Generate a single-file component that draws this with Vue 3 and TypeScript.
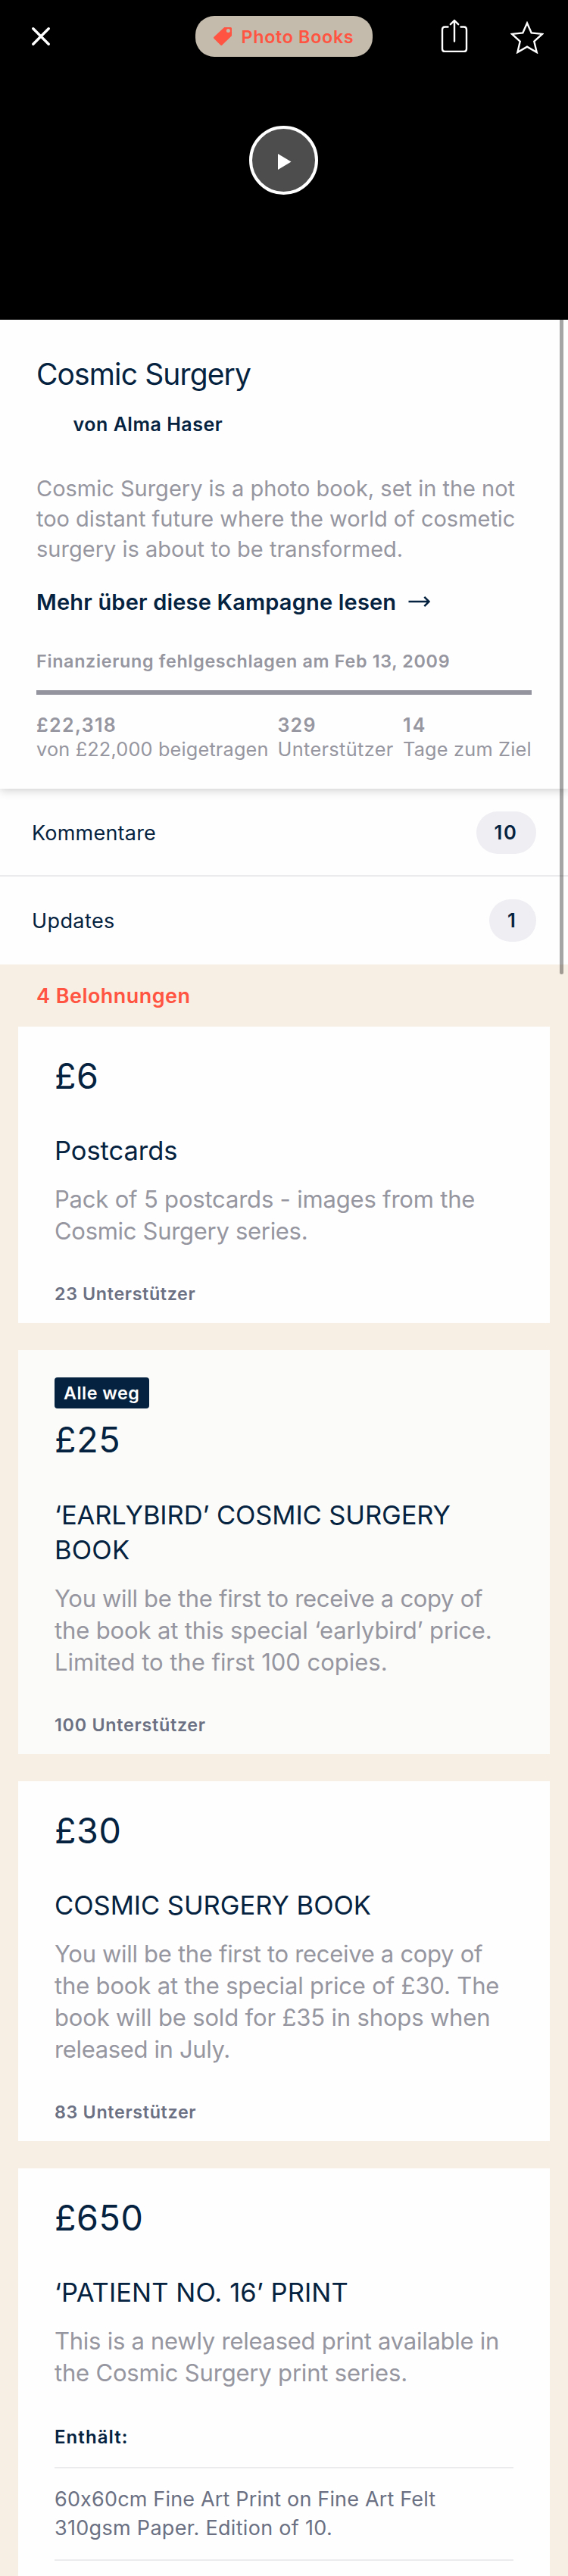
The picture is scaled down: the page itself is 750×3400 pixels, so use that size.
<script setup lang="ts">
interface Line {
  text: string
  spacing: number
}
interface Reward {
  badge?: string
  price: Line
  title: Line[]
  description: Line[]
  backers?: Line
  items?: Line[]
}

const blurb: Line[] = [
  { text: 'Cosmic Surgery is a photo book, set in the not', spacing: -0.01 },
  { text: 'too distant future where the world of cosmetic', spacing: -0.03 },
  { text: 'surgery is about to be transformed.', spacing: 0.01 },
]

const stats = [
  { value: { text: '£22,318', spacing: 1.35 }, label: { text: 'von £22,000 beigetragen', spacing: 0.17 } },
  { value: { text: '329', spacing: 1.2 }, label: { text: 'Unterstützer', spacing: 0.36 } },
  { value: { text: '14', spacing: 2.2 }, label: { text: 'Tage zum Ziel', spacing: 0.2 } },
]

const links = [
  { label: { text: 'Kommentare', spacing: 0.22 }, count: '10', wide: true },
  { label: { text: 'Updates', spacing: 0.4 }, count: '1', wide: false },
]

const rewards: Reward[] = [
  {
    price: { text: '£6', spacing: 0.6 },
    title: [{ text: 'Postcards', spacing: -0.05 }],
    description: [
      { text: 'Pack of 5 postcards - images from the', spacing: -0.19 },
      { text: 'Cosmic Surgery series.', spacing: -0.3 },
    ],
    backers: { text: '23 Unterstützer', spacing: 0.63 },
  },
  {
    badge: 'Alle weg',
    price: { text: '£25', spacing: 0.7 },
    title: [
      { text: '‘EARLYBIRD’ COSMIC SURGERY', spacing: -0.1 },
      { text: 'BOOK', spacing: 0.2 },
    ],
    description: [
      { text: 'You will be the first to receive a copy of', spacing: -0.31 },
      { text: 'the book at this special ‘earlybird’ price.', spacing: -0.14 },
      { text: 'Limited to the first 100 copies.', spacing: -0.02 },
    ],
    backers: { text: '100 Unterstützer', spacing: 0.73 },
  },
  {
    price: { text: '£30', spacing: 0.6 },
    title: [{ text: 'COSMIC SURGERY BOOK', spacing: -0.03 }],
    description: [
      { text: 'You will be the first to receive a copy of', spacing: -0.31 },
      { text: 'the book at the special price of £30. The', spacing: -0.16 },
      { text: 'book will be sold for £35 in shops when', spacing: -0.16 },
      { text: 'released in July.', spacing: -0.36 },
    ],
    backers: { text: '83 Unterstützer', spacing: 0.66 },
  },
  {
    price: { text: '£650', spacing: 0.6 },
    title: [{ text: '‘PATIENT NO. 16’ PRINT', spacing: 0.08 }],
    description: [
      { text: 'This is a newly released print available in', spacing: -0.26 },
      { text: 'the Cosmic Surgery print series.', spacing: -0.19 },
    ],
    items: [
      { text: '60x60cm Fine Art Print on Fine Art Felt', spacing: 0.17 },
      { text: '310gsm Paper. Edition of 10.', spacing: 0.3 },
    ],
  },
]

const tracking = (line: Line) => ({ letterSpacing: `${line.spacing}px` })
</script>

<template>
  <div class="page">
    <header class="hero">
      <nav class="toolbar">
        <svg class="close" width="24" height="24" viewBox="0 0 24 24" aria-label="Schließen">
          <path d="M1.8 1.8 22.2 22.2M22.2 1.8 1.8 22.2" />
        </svg>
        <span class="category">
          <svg class="tag" width="24" height="24" viewBox="0 0 24 24">
            <path
              fill-rule="evenodd"
              d="M14.2 0H22.5Q24 0 24 1.5V11.2L11.3 23.6Q10.2 24.5 9.2 23.5L.4 14.8Q-.4 13.8.5 12.8ZM19.4 1.9A2.5 2.5 0 1 0 19.4 6.9A2.5 2.5 0 1 0 19.4 1.9Z"
            />
          </svg>
          <span class="category-name">Photo Books</span>
        </span>
        <svg class="share" width="36" height="44" viewBox="0 0 36 44">
          <path d="M9.5 10.5H5.5Q2 10.5 2 14V39.500Q2 43 5.500 43H30.500Q34 43 34 39.500V14Q34 10.500 30.500 10.500H26.500" />
          <path d="M18 29.500V2M12.800 7.200 18 2 23.200 7.200" />
        </svg>
        <svg class="star" width="44" height="43" viewBox="0 0 44 43">
          <path d="M22 2.500 27.700 15.400 42 16.900 31.300 26.700 34.700 41 22 33.700 9.400 41 12.700 26.700 2 16.900 16.300 15.400Z" />
        </svg>
      </nav>
      <div class="play">
        <svg width="18" height="21" viewBox="0 0 18 21"><path d="M0 0 17.500 10.500 0 21Z" /></svg>
      </div>
    </header>

    <div class="scrollbar"></div>

    <main>
      <section class="summary">
        <h1>Cosmic Surgery</h1>
        <p class="author">von Alma Haser</p>
        <p class="blurb">
          <span v-for="line in blurb" :key="line.text" class="line" :style="tracking(line)">{{ line.text }}</span>
        </p>
        <a class="more">
          <span>Mehr über diese Kampagne lesen</span>
          <svg width="29" height="16" viewBox="0 0 29 16"><path d="M0.500 8H27.500M21.300 1.800 27.500 8 21.300 14.200" /></svg>
        </a>
        <p class="status">Finanzierung fehlgeschlagen am Feb 13, 2009</p>
        <div class="progress"></div>
        <div class="stats">
          <div v-for="stat in stats" :key="stat.label.text" class="stat">
            <div class="stat-value" :style="tracking(stat.value)">{{ stat.value.text }}</div>
            <div class="stat-label" :style="tracking(stat.label)">{{ stat.label.text }}</div>
          </div>
        </div>
      </section>

      <section class="links">
        <div v-for="link in links" :key="link.label.text" class="link">
          <span :style="tracking(link.label)">{{ link.label.text }}</span>
          <span class="count" :class="{ wide: link.wide }">{{ link.count }}</span>
        </div>
      </section>

      <section class="rewards">
        <h2>4 Belohnungen</h2>
        <article
          v-for="reward in rewards"
          :key="reward.price.text"
          class="card"
          :class="{ gone: reward.badge, open: reward.items }"
        >
          <div v-if="reward.badge" class="badge">{{ reward.badge }}</div>
          <div class="price" :style="tracking(reward.price)">{{ reward.price.text }}</div>
          <h3>
            <span v-for="line in reward.title" :key="line.text" class="line" :style="tracking(line)">{{ line.text }}</span>
          </h3>
          <p class="description">
            <span v-for="line in reward.description" :key="line.text" class="line" :style="tracking(line)">{{ line.text }}</span>
          </p>
          <div v-if="reward.backers" class="backers" :style="tracking(reward.backers)">{{ reward.backers.text }}</div>
          <template v-if="reward.items">
            <div class="includes">Enthält:</div>
            <div class="items">
              <span v-for="line in reward.items" :key="line.text" class="line" :style="tracking(line)">{{ line.text }}</span>
            </div>
          </template>
        </article>
      </section>
    </main>
  </div>
</template>

<style>
body {
  margin: 0;
  background: #f7efe4;
}
</style>

<style scoped>
.page {
  position: relative;
  width: 750px;
  height: 3400px;
  overflow: hidden;
  background: #f7efe4;
  color: #052340;
  font-family: Inter, "Liberation Sans", sans-serif;
  font-weight: 400;
}
h1,
h2,
h3,
p {
  margin: 0;
  font-weight: 400;
}
svg {
  display: block;
  flex: none;
}
.line {
  display: block;
  white-space: nowrap;
}

/* Video header */
.hero {
  height: 422px;
  background: #000;
}
.toolbar {
  display: flex;
  height: 96px;
  padding-left: 42px;
  align-items: center;
  box-sizing: border-box;
}
.close,
.share,
.star {
  fill: none;
  stroke: #fff;
}
.close {
  stroke-width: 3.4;
  stroke-linecap: round;
}
.category {
  display: flex;
  align-items: center;
  width: 234px;
  height: 54px;
  margin-left: 192px;
  padding-left: 24px;
  box-sizing: border-box;
  border-radius: 25px;
  background: #c4bbac;
  color: #ff5441;
}
.tag {
  fill: #ff5441;
}
.category-name {
  margin-left: 12.5px;
  font-size: 23.3px;
  line-height: 29px;
  font-weight: 600;
  letter-spacing: 0.68px;
  white-space: nowrap;
}
.share {
  margin: -2px 0 0 90px;
  stroke-width: 2.4;
  stroke-linecap: round;
  stroke-linejoin: round;
}
.star {
  margin: 3px 0 0 56px;
  stroke-width: 2.4;
}
.play {
  display: flex;
  align-items: center;
  width: 91px;
  height: 91px;
  margin: 70px 0 0 329px;
  padding: 3px 0 0 34px;
  box-sizing: border-box;
  border: 4px solid #fff;
  border-radius: 50%;
  background: #4d4d4d;
}
.play path {
  fill: #fff;
}

.scrollbar {
  position: absolute;
  z-index: 2;
  top: 422px;
  right: 6px;
  width: 5px;
  height: 864px;
  border-radius: 0 0 3px 3px;
  background: rgba(0, 0, 0, 0.35);
}

/* Campaign summary */
.summary {
  position: relative;
  z-index: 1;
  height: 619px;
  padding: 48px 48px 0;
  box-sizing: border-box;
  background: #fefefe;
  box-shadow: 0 2px 12px rgba(0, 0, 0, 0.2);
  clip-path: inset(0 0 -20px 0);
}
h1 {
  font-size: 39px;
  line-height: 47px;
  letter-spacing: -0.88px;
}
.author {
  margin: 28px 0 0 48.5px;
  font-size: 25px;
  line-height: 30px;
  font-weight: 600;
  letter-spacing: 0.53px;
}
.blurb {
  margin-top: 49.5px;
  color: #9696a0;
  font-size: 29px;
  line-height: 40px;
}
.more {
  display: flex;
  align-items: center;
  margin-top: 32.5px;
  font-size: 29px;
  line-height: 35px;
  font-weight: 600;
  letter-spacing: 0.19px;
}
.more svg {
  margin: 0 0 1px 15.5px;
  fill: none;
  stroke: #052340;
  stroke-width: 2.5;
}
.status {
  margin-top: 46px;
  color: #9696a0;
  font-size: 23.3px;
  line-height: 29px;
  font-weight: 600;
  letter-spacing: 0.68px;
  white-space: nowrap;
}
.progress {
  height: 6px;
  margin-top: 24px;
  background: #94949e;
}
.stats {
  display: grid;
  grid-template-columns: 318.5px 165.5px 1fr;
  margin-top: 25px;
  color: #9696a0;
  white-space: nowrap;
}
.stat-value {
  font-size: 25px;
  line-height: 30px;
  font-weight: 600;
}
.stat-label {
  margin-top: 1px;
  font-size: 25.3px;
  line-height: 31px;
}

/* Comments and updates */
.links {
  background: #fefefe;
}
.link {
  display: flex;
  align-items: center;
  justify-content: space-between;
  height: 116px;
  padding: 0 42px;
  box-sizing: border-box;
  font-size: 27px;
  line-height: 33px;
}
.link:first-child {
  box-shadow: inset 0 -2px #ebebed;
}
.count {
  width: 62px;
  height: 56px;
  padding-left: 24px;
  box-sizing: border-box;
  border-radius: 28px;
  background: #eeeef3;
  font-size: 25.5px;
  line-height: 55px;
  font-weight: 600;
}
.count.wide {
  width: 79px;
  padding-left: 23.5px;
  letter-spacing: 1.8px;
}

/* Rewards */
.rewards {
  display: flow-root;
  padding: 0 24px;
}
h2 {
  margin: 25px 0 24px 24px;
  color: #ff5441;
  font-size: 27px;
  line-height: 33px;
  font-weight: 600;
  letter-spacing: 0.46px;
}
.card {
  margin-bottom: 36px;
  padding: 37px 48px 24px;
  background: #fefefe;
}
.card.gone {
  padding-top: 36px;
  background: #fbfbf9;
}
.card.open {
  margin-bottom: 0;
  padding-bottom: 48px;
}
.badge {
  width: 125px;
  height: 41px;
  margin-bottom: 13px;
  padding-left: 12px;
  box-sizing: border-box;
  border-radius: 4px;
  background: #052340;
  color: #fefefe;
  font-size: 23.3px;
  line-height: 41px;
  font-weight: 600;
  letter-spacing: 0.5px;
  white-space: nowrap;
}
.price {
  margin-bottom: 47.5px;
  font-size: 46.6px;
  line-height: 56px;
}
.gone .price {
  margin-bottom: 48.5px;
}
h3 {
  font-size: 34.5px;
  line-height: 46px;
}
.description {
  margin-top: 20px;
  color: #9696a0;
  font-size: 31px;
  line-height: 42px;
}
.backers {
  margin-top: 47.5px;
  color: #6b7183;
  font-size: 23.3px;
  line-height: 29px;
  font-weight: 600;
}
.includes {
  margin-top: 49px;
  font-size: 24px;
  line-height: 29px;
  font-weight: 600;
  letter-spacing: 1.05px;
}
.items {
  margin-top: 25.5px;
  padding: 22px 0;
  border: solid #ebebed;
  border-width: 2px 0;
  color: #6b7183;
  font-size: 27px;
  line-height: 38px;
}
</style>
